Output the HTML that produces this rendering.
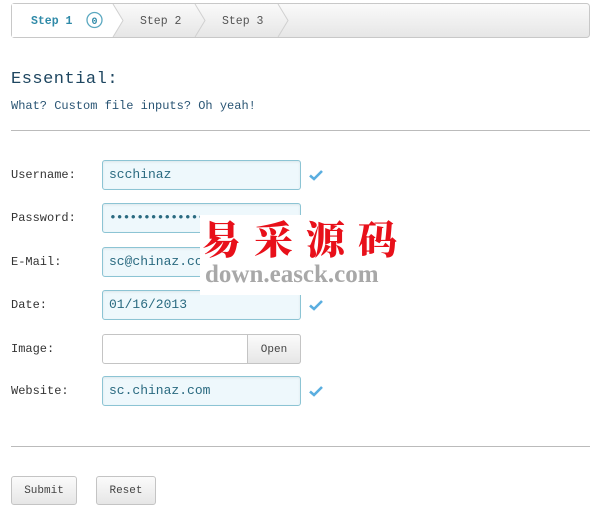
<!DOCTYPE html>
<html><head><style>
body{margin:0;width:600px;height:510px;background:#fff;font-family:"Liberation Mono","Noto Sans CJK SC",monospace;position:relative;overflow:hidden}
.a{position:absolute}
.lbl{position:absolute;left:11px;font-size:12px;color:#333}
.inp{position:absolute;left:102px;border:1px solid #8cc4d4;border-radius:3px;background:#eef8fc;font-size:13px;color:#2a6a80;line-height:28px;padding-left:6px;box-sizing:border-box;width:199px;height:30px;box-shadow:inset 0 1px 2px rgba(0,0,0,.08)}
.chk{position:absolute;left:309px;width:14px;height:12px}
.btn{position:absolute;height:29px;border:1px solid #c4c4c4;border-radius:3px;background:linear-gradient(#fbfbfb,#e6e6e6);font-size:11px;color:#444;text-align:center;line-height:29px;box-sizing:border-box}
</style></head><body>
<svg class="a" style="left:0;top:0" width="600" height="42">
<defs><linearGradient id="g" x1="0" y1="0" x2="0" y2="1"><stop offset="0" stop-color="#fafafa"/><stop offset="1" stop-color="#e6e6e6"/></linearGradient></defs>
<rect x="11.5" y="3.5" width="578" height="34" rx="3" fill="url(#g)" stroke="#c8c8c8"/>
<path d="M12 4 H113 L123 20.5 L113 37 H12 Z" fill="#fff"/>
<path d="M113 4 L123 20.5 L113 37" fill="none" stroke="#d0d0d0"/>
<path d="M195 4 L205 20.5 L195 37" fill="none" stroke="#d0d0d0"/>
<path d="M278 4 L288 20.5 L278 37" fill="none" stroke="#d0d0d0"/>
<text x="31" y="24" font-family="Liberation Mono" font-size="11.5" font-weight="bold" fill="#2f8aa8">Step 1</text>
<circle cx="94.5" cy="20" r="7.5" fill="#fff" stroke="#5aa8c0" stroke-width="1.3"/>
<text x="94.5" y="24" text-anchor="middle" font-family="Liberation Mono" font-size="10" font-weight="bold" fill="#2f8aa8">0</text>
<text x="140" y="24" font-family="Liberation Mono" font-size="11.5" fill="#555">Step 2</text>
<text x="222" y="24" font-family="Liberation Mono" font-size="11.5" fill="#555">Step 3</text>
</svg>
<div class="a" style="left:11px;top:70px;font-size:17px;color:#1e4660;letter-spacing:0.5px">Essential:</div>
<div class="a" style="left:11px;top:99px;font-size:12px;color:#2a5574">What? Custom file inputs? Oh yeah!</div>
<div class="a" style="left:11px;top:130px;width:579px;height:1px;background:#bbb"></div>

<div class="lbl" style="top:168px">Username:</div>
<div class="inp" style="top:160px">scchinaz</div>
<div class="lbl" style="top:211px">Password:</div>
<div class="inp" style="top:203px;letter-spacing:-1px">••••••••••••••••</div>
<div class="lbl" style="top:255px">E-Mail:</div>
<div class="inp" style="top:247px">sc@chinaz.com</div>
<div class="lbl" style="top:298px">Date:</div>
<div class="inp" style="top:290px">01/16/2013</div>
<div class="lbl" style="top:342px">Image:</div>
<div class="a" style="left:102px;top:334px;width:199px;height:30px;border:1px solid #c4c4c4;border-radius:3px;box-sizing:border-box;background:#fff"></div>
<div class="btn" style="left:247px;top:334px;width:54px;height:30px;line-height:30px;border-radius:0 3px 3px 0">Open</div>
<div class="lbl" style="top:384px">Website:</div>
<div class="inp" style="top:376px">sc.chinaz.com</div>

<svg class="chk" style="top:169px" viewBox="0 0 14 12"><path d="M1 6.5 L5 10 L13 2" fill="none" stroke="#5aaee0" stroke-width="2.6"/></svg>
<svg class="chk" style="top:299px" viewBox="0 0 14 12"><path d="M1 6.5 L5 10 L13 2" fill="none" stroke="#5aaee0" stroke-width="2.6"/></svg>
<svg class="chk" style="top:385px" viewBox="0 0 14 12"><path d="M1 6.5 L5 10 L13 2" fill="none" stroke="#5aaee0" stroke-width="2.6"/></svg>

<div class="a" style="left:200px;top:215px;width:202px;height:80px;background:#fff"></div>
<div class="a" style="left:202px;top:216px;font-family:'Noto Serif CJK SC','WenQuanYi Zen Hei',serif;font-size:39px;font-weight:900;color:#e8101a;letter-spacing:13px;line-height:44px;white-space:nowrap">易采源码</div>
<div class="a" style="left:205px;top:261px;font-family:'Liberation Serif',serif;font-size:25px;font-weight:bold;color:#a8a8a8;line-height:28px;white-space:nowrap">down.easck.com</div>

<div class="a" style="left:11px;top:446px;width:579px;height:1px;background:#bbb"></div>
<div class="btn" style="left:11px;top:476px;width:66px">Submit</div>
<div class="btn" style="left:96px;top:476px;width:60px">Reset</div>
</body></html>
